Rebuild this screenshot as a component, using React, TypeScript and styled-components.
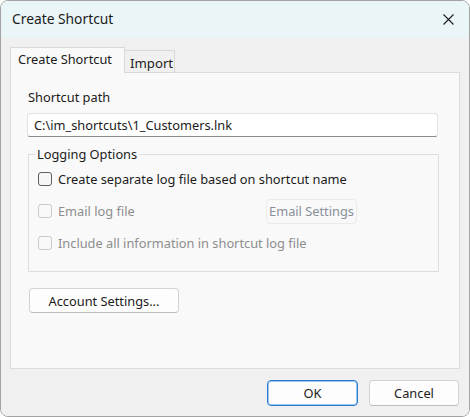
import React from 'react';
import styled, { createGlobalStyle } from 'styled-components';

const GlobalStyle = createGlobalStyle`
    html, body {
        margin: 0;
        padding: 0;
        background: #ffffff;
    }
    * {
        box-sizing: border-box;
    }
`;

function CloseIcon() {
    return (
        <svg width="11" height="11" viewBox="0 0 11 11">
            <path d="M0.5 0.5 L10.5 10.5 M10.5 0.5 L0.5 10.5" stroke="#1c1c1c" strokeWidth="1.1" fill="none" />
        </svg>
    );
}

function Check({ label, disabled }: { label: string; disabled?: boolean }) {
    return (
        <CheckLabel disabled={disabled}>
            <CheckInput type="checkbox" disabled={disabled} />
            <span>{label}</span>
        </CheckLabel>
    );
}

function App() {
    return (
        <>
            <GlobalStyle />
            <Window>
                <TitleBar>
                    <Title>Create Shortcut</Title>
                    <CloseButton>
                        <CloseIcon />
                    </CloseButton>
                </TitleBar>
                <Body>
                    <TabStrip>
                        <Tab active>Create Shortcut</Tab>
                        <Tab>Import</Tab>
                    </TabStrip>
                    <Panel>
                        <FieldLabel>Shortcut path</FieldLabel>
                        <PathInput defaultValue="C:\im_shortcuts\1_Customers.lnk" />
                        <Group>
                            <Legend>Logging Options</Legend>
                            <Row>
                                <Check label="Create separate log file based on shortcut name" />
                            </Row>
                            <Row>
                                <Check label="Email log file" disabled />
                                <EmailButton disabled>Email Settings</EmailButton>
                            </Row>
                            <Row>
                                <Check label="Include all information in shortcut log file" disabled />
                            </Row>
                        </Group>
                        <AccountButton>Account Settings...</AccountButton>
                    </Panel>
                    <Footer>
                        <Button primary>OK</Button>
                        <Button>Cancel</Button>
                    </Footer>
                </Body>
            </Window>
        </>
    );
}

export default App;

const Window = styled.div`
    width: 470px;
    height: 417px;
    display: flex;
    flex-direction: column;
    border: 1px solid #a3a3a3;
    border-radius: 8px;
    overflow: hidden;
    font-family: 'Segoe UI', 'Noto Sans', sans-serif;
    font-size: 12.8px;
    color: #1b1b1b;
`;

const TitleBar = styled.div`
    height: 37px;
    flex-shrink: 0;
    display: flex;
    align-items: center;
    justify-content: space-between;
    padding: 0 15px 0 11px;
    background: #eaf5f8;
`;

const Title = styled.span`
    font-size: 13.8px;
    padding-bottom: 2px;
`;

const CloseButton = styled.div`
    display: flex;
    align-items: center;
    padding-bottom: 1px;
`;

const Body = styled.div`
    flex: 1;
    display: flex;
    flex-direction: column;
    padding: 10px 9px 10px 9px;
    background: #f0f0f0;
`;

const TabStrip = styled.div`
    display: flex;
    align-items: flex-end;
    height: 25px;
    margin-bottom: -1px;
    position: relative;
    z-index: 1;
`;

const Tab = styled.div<{ active?: boolean }>`
    height: ${(p) => (p.active ? '26px' : '23px')};
    padding: ${(p) => (p.active ? '3px 0 0 7px' : '4px 0 0 5px')};
    width: ${(p) => (p.active ? '115px' : '51px')};
    margin-left: ${(p) => (p.active ? '0' : '-1px')};
    background: ${(p) => (p.active ? '#f9f9f9' : '#f0f0f0')};
    border: 1px solid #d9d9d9;
    border-bottom: ${(p) => (p.active ? 'none' : '1px solid #d9d9d9')};
    line-height: 16px;
    white-space: nowrap;
    font-size: ${(p) => (p.active ? '12.8px' : '13.2px')};
`;

const Panel = styled.div`
    height: 297px;
    display: flex;
    flex-direction: column;
    align-items: flex-start;
    padding: 16px 20px 0 16px;
    background: #f9f9f9;
    border: 1px solid #dcdcdc;
`;

const FieldLabel = styled.div`
    line-height: 16px;
    margin-bottom: 8px;
    padding-left: 1px;
`;

const PathInput = styled.input`
    width: 411px;
    height: 24px;
    margin: 0 0 9px 0;
    padding: 0 6px;
    font: inherit;
    color: #1b1b1b;
    background: #ffffff;
    border: 1px solid #e3e3e3;
    border-bottom: 1px solid #8a8a8a;
    border-radius: 3px;
    outline: none;
`;

const Group = styled.fieldset`
    width: 411px;
    margin: 0 0 16px 1px;
    padding: 1px 9px 12px 9px;
    min-width: 0;
    border: 1px solid #dedede;
`;

const Legend = styled.legend`
    margin-left: -3px;
    padding: 0 2px;
    line-height: 16px;
`;

const Row = styled.div`
    height: 32px;
    display: flex;
    align-items: center;
`;

const CheckLabel = styled.label<{ disabled?: boolean }>`
    display: flex;
    align-items: center;
    gap: 6px;
    line-height: 16px;
    color: ${(p) => (p.disabled ? '#8d8d8d' : '#1b1b1b')};
    width: 228px;
    white-space: nowrap;
`;

const CheckInput = styled.input`
    appearance: none;
    width: 14px;
    height: 14px;
    margin: 0;
    flex-shrink: 0;
    border: 1px solid #5f5f5f;
    border-radius: 3px;
    background: #f6f6f6;

    &:disabled {
        border-color: #cbcbcb;
        background: #f9f9f9;
    }
`;

const BaseButton = styled.button`
    height: 25px;
    font: inherit;
    color: #1b1b1b;
    background: #fdfdfd;
    border: 1px solid #d3d3d3;
    border-bottom-color: #bdbdbd;
    border-radius: 4px;
    padding: 0;
    white-space: nowrap;
`;

const EmailButton = styled(BaseButton)`
    width: 91px;
    &:disabled {
        color: #8a8f99;
        background: #f9f9f9;
        border-color: #eaeaea;
    }
`;

const AccountButton = styled(BaseButton)`
    width: 150px;
    margin-left: 2px;
`;

const Footer = styled.div`
    display: flex;
    justify-content: flex-end;
    gap: 11px;
    margin-top: 11px;
    padding-right: 1px;
`;

const Button = styled(BaseButton)<{ primary?: boolean }>`
    width: ${(p) => (p.primary ? '91px' : '90px')};
    height: 26px;
    border: 1px solid ${(p) => (p.primary ? '#2b7bd1' : '#d3d3d3')};
    border-bottom-color: ${(p) => (p.primary ? '#2b7bd1' : '#bdbdbd')};
    box-shadow: ${(p) => (p.primary ? 'inset 0 0 0 1px #9cc5ee' : 'none')};
`;
